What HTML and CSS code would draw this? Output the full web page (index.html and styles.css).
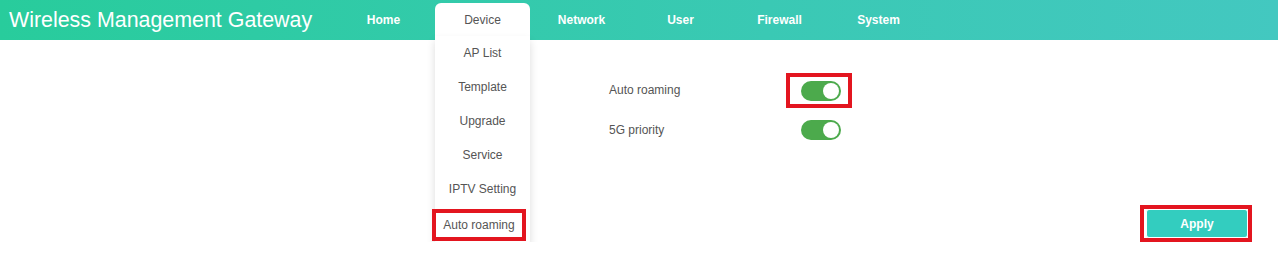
FILE: index.html
```html
<!DOCTYPE html>
<html lang="en">

<head>
    <meta charset="UTF-8">
    <title>Wireless Management Gateway</title>
    <link rel="stylesheet" href="styles.css">
</head>

<body>
    <div class="header">
        <div class="brand">Wireless Management Gateway</div>
        <ul class="nav">
            <li class="nav-item">Home</li>
            <li class="nav-item active">Device
                <ul class="dropdown">
                    <li>AP List</li>
                    <li>Template</li>
                    <li>Upgrade</li>
                    <li>Service</li>
                    <li>IPTV Setting</li>
                    <li class="current"><span class="mark">Auto roaming</span></li>
                </ul>
            </li>
            <li class="nav-item">Network</li>
            <li class="nav-item">User</li>
            <li class="nav-item">Firewall</li>
            <li class="nav-item">System</li>
        </ul>
    </div>

    <div class="main">
        <div class="settings">
            <div class="row">
                <span class="label">Auto roaming</span>
                <span class="mark toggle-mark"><span class="switch on"></span></span>
            </div>
            <div class="row">
                <span class="label">5G priority</span>
                <span class="switch on"></span>
            </div>
        </div>
        <div class="actions">
            <span class="mark btn-mark"><button class="apply">Apply</button></span>
        </div>
    </div>
</body>

</html>
```

FILE: styles.css
```css
body {
    margin: 0;
    font-family: 'Liberation Sans', Arial, sans-serif;
    background-color: #ffffff;
    color: #555;
}

ul {
    list-style: none;
    margin: 0;
    padding: 0;
}

.header {
    display: flex;
    align-items: flex-end;
    height: 40px;
    padding-left: 9px;
    background: linear-gradient(90deg, #28cc9c 0%, #3ac9b4 60%, #43c8c0 100%);
}

.brand {
    width: 327px;
    align-self: center;
    font-size: 21.4px;
    color: #ffffff;
    margin-top: 1px;
}

.nav {
    display: flex;
    gap: 4px;
    height: 37px;
}

.nav-item {
    position: relative;
    width: 95px;
    line-height: 34px;
    text-align: center;
    font-size: 12px;
    font-weight: bold;
    color: #ffffff;
}

.nav-item.active {
    background-color: #ffffff;
    color: #555;
    font-weight: normal;
    border-radius: 6px 6px 0 0;
}

.dropdown {
    position: absolute;
    top: 33px;
    left: 0;
    width: 95px;
    padding-bottom: 4px;
    background-color: #ffffff;
    border-radius: 0 0 4px 4px;
    box-shadow: 0 5px 9px rgba(0, 0, 0, 0.14);
    z-index: 2;
}

.dropdown li {
    height: 34px;
    line-height: 34px;
    font-size: 12px;
    color: #555;
}

.dropdown li.current {
    position: relative;
}

.mark {
    border: 4px solid #e3151f;
}

.dropdown .mark {
    position: absolute;
    left: -3px;
    right: 4px;
    top: 3px;
    bottom: -1px;
    line-height: 24px;
}

.main {
    display: flex;
    justify-content: space-between;
    padding: 30px 26px 0 609px;
}

.row {
    display: flex;
    align-items: center;
    height: 40px;
}

.label {
    width: 192px;
    font-size: 12px;
    color: #555;
}

.toggle-mark {
    margin-left: -15px;
    padding: 4px 7px 3px 11px;
    line-height: 0;
}

.switch {
    position: relative;
    display: inline-block;
    width: 40px;
    height: 20px;
    border-radius: 10px;
    background-color: #4caa4c;
}

.switch::after {
    content: "";
    position: absolute;
    top: 2px;
    left: 2px;
    width: 16px;
    height: 16px;
    border-radius: 50%;
    background-color: #ffffff;
}

.switch.on::after {
    left: 22px;
}

.actions {
    margin-top: 135px;
}

.btn-mark {
    display: inline-block;
    padding: 0 0 0 2px;
    line-height: 0;
}

.apply {
    width: 102px;
    height: 29px;
    border: 1px solid #ffffff;
    border-radius: 3px;
    background-color: #33cdbf;
    color: #ffffff;
    font-family: 'Liberation Sans', Arial, sans-serif;
    font-size: 12px;
    font-weight: bold;
}
```
